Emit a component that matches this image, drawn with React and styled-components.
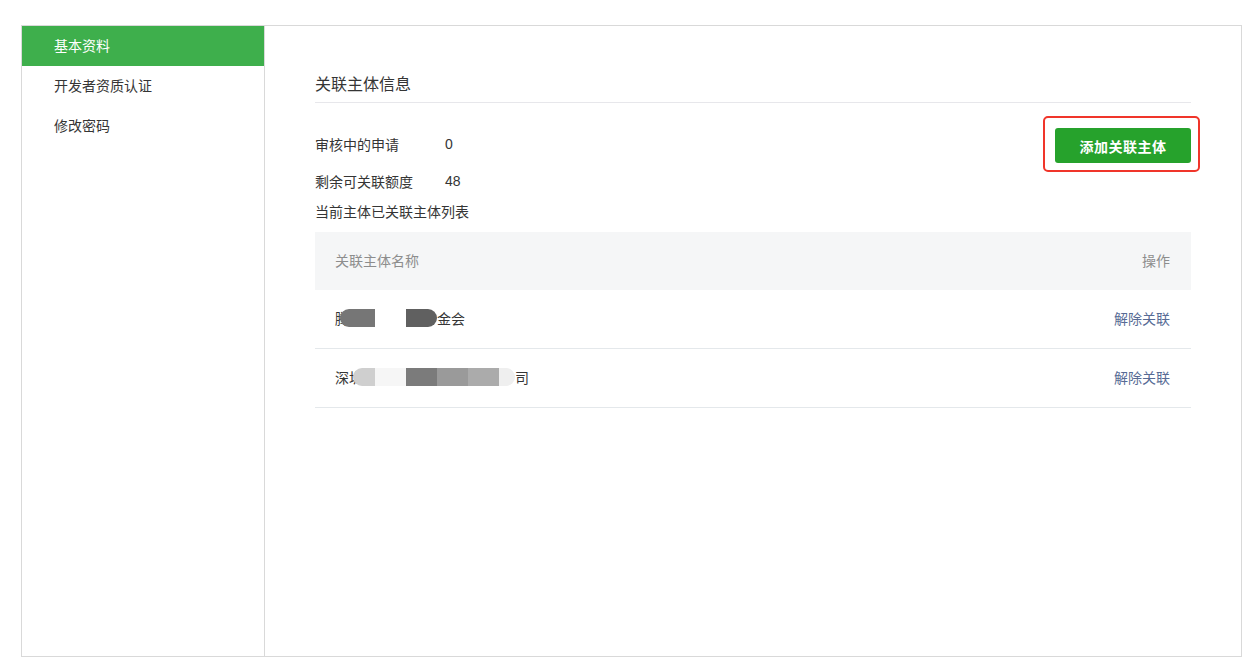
import styled, { createGlobalStyle } from "styled-components"

const GlobalStyle = createGlobalStyle`
  html, body {
    margin: 0;
    padding: 0;
    background: #fff;
  }
  body {
    font-family: "PingFang SC", "Noto Sans CJK SC", "Noto Sans", sans-serif;
    font-size: 14px;
    color: #353535;
  }
`

const Page = styled.div`
  padding: 25px 0 0 21px;
`

const Frame = styled.div`
  display: flex;
  width: 1221px;
  height: 632px;
  box-sizing: border-box;
  border: 1px solid #d9d9d9;
`

const Sidebar = styled.nav`
  width: 242px;
  flex-shrink: 0;
  border-right: 1px solid #d9d9d9;
`

const NavItem = styled.div`
  height: 40px;
  line-height: 38px;
  padding-bottom: 2px;
  box-sizing: border-box;
  padding-left: 32px;
  font-size: 14px;
  color: ${(p) => (p.$active ? "#fff" : "#353535")};
  background: ${(p) => (p.$active ? "#3eaf4c" : "transparent")};
`

const Main = styled.main`
  flex: 1;
  padding: 45px 50px 0 50px;
`

const Title = styled.h2`
  margin: 0;
  font-size: 16px;
  font-weight: 400;
  line-height: 24px;
  padding-bottom: 7px;
  border-bottom: 1px solid #e7e7eb;
  color: #353535;
`

const TopRow = styled.div`
  display: flex;
  align-items: flex-start;
  justify-content: space-between;
  height: 35px;
  margin-top: 25px;
`

const Stat = styled.div`
  display: flex;
  line-height: 20px;
  padding-top: ${(p) => p.$pt || 0}px;
  margin-top: ${(p) => p.$mt || 0}px;
`

const Label = styled.span`
  width: 130px;
`

const Value = styled.span`
  font-family: "Liberation Sans", Arial, sans-serif;
`

const ButtonWrap = styled.div`
  position: relative;
`

const Highlight = styled.div`
  position: absolute;
  left: -12px;
  top: -12px;
  right: -9px;
  bottom: -9px;
  border: 2px solid #f0352a;
  border-radius: 5px;
  pointer-events: none;
`

const Button = styled.button`
  display: block;
  width: 136px;
  height: 35px;
  border: none;
  border-radius: 3px;
  background: #26a22c;
  color: #fff;
  font-family: inherit;
  font-size: 14px;
  font-weight: 700;
  letter-spacing: 0.5px;
  cursor: pointer;
`

const Table = styled.div`
  margin-top: 11px;
`

const Row = styled.div`
  display: flex;
  justify-content: space-between;
  align-items: center;
  height: ${(p) => (p.$head ? 58 : 59)}px;
  padding: 0 21px 2px 20px;
  box-sizing: border-box;
  background: ${(p) => (p.$head ? "#f5f6f7" : "#fff")};
  color: ${(p) => (p.$head ? "#8d8d8d" : "#353535")};
  border-bottom: ${(p) => (p.$head ? "none" : "1px solid #e4e8eb")};
`

const Name = styled.span`
  display: flex;
  align-items: center;
`

const Blur = styled.span`
  display: inline-block;
  width: ${(p) => p.$w}px;
  height: 18px;
  background: ${(p) => p.$c};
  margin-left: ${(p) => p.$ml || 0}px;
  border-radius: ${(p) => p.$r || "0"};
`

const Link = styled.a`
  color: #576b95;
  text-decoration: none;
  cursor: pointer;
`

const rows = [
  {
    id: 1,
    head: "腾",
    tail: "金会",
    blocks: [
      { w: 35, c: "#767676", ml: -9, r: "9px 0 0 9px" },
      { w: 31, c: "#fff" },
      { w: 31, c: "#606060", r: "0 9px 9px 0" },
    ],
  },
  {
    id: 2,
    head: "深圳",
    tail: "司",
    blocks: [
      { w: 22, c: "#cfcfcf", ml: -10, r: "9px 0 0 9px" },
      { w: 31, c: "#f6f6f6" },
      { w: 31, c: "#7b7b7b" },
      { w: 31, c: "#9a9a9a" },
      { w: 31, c: "#ababab" },
      { w: 16, c: "#efefef", r: "0 9px 9px 0" },
    ],
  },
]

function App() {
  return (
    <>
      <GlobalStyle />
      <Page>
        <Frame>
          <Sidebar>
            <NavItem $active>基本资料</NavItem>
            <NavItem>开发者资质认证</NavItem>
            <NavItem>修改密码</NavItem>
          </Sidebar>
          <Main>
            <Title>关联主体信息</Title>
            <TopRow>
              <Stat $pt={6}>
                <Label>审核中的申请</Label>
                <Value>0</Value>
              </Stat>
              <ButtonWrap>
                <Button>添加关联主体</Button>
                <Highlight />
              </ButtonWrap>
            </TopRow>
            <Stat $mt={8}>
              <Label>剩余可关联额度</Label>
              <Value>48</Value>
            </Stat>
            <Stat $mt={10}>当前主体已关联主体列表</Stat>
            <Table>
              <Row $head>
                <span>关联主体名称</span>
                <span>操作</span>
              </Row>
              {rows.map((r) => (
                <Row key={r.id}>
                  <Name>
                    {r.head}
                    {r.blocks.map((b, i) => (
                      <Blur key={i} $w={b.w} $c={b.c} $ml={b.ml} $r={b.r} />
                    ))}
                    {r.tail}
                  </Name>
                  <Link>解除关联</Link>
                </Row>
              ))}
            </Table>
          </Main>
        </Frame>
      </Page>
    </>
  )
}

export default App
